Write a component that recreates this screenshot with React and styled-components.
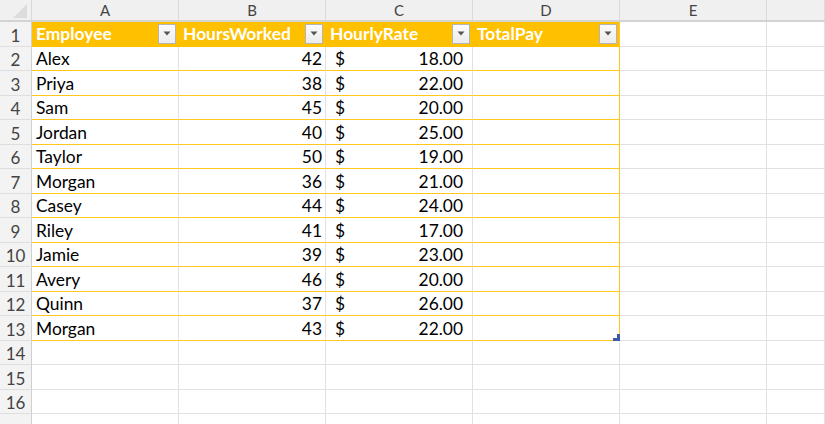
import React from "react";
import styled, { createGlobalStyle } from "styled-components";

const Global = createGlobalStyle`
  html, body { margin: 0; padding: 0; background: #ffffff; overflow: hidden; }
  body { font-family: Lato, "Liberation Sans", sans-serif; }
`;

const ROW_H = 24.5;
const COL_W = 147;
const GOLD = "#FFC000";
const GOLD_LINE = "#FFC71F";
const GRID = "#E1E1E1";

const Sheet = styled.div`
  width: 825px;
  height: 424px;
  display: flex;
  flex-direction: column;
  overflow: hidden;
  background: #fff;
`;

const HeaderBar = styled.div`
  display: flex;
  height: 22px;
  flex: none;
  background: #f0f0f0;
  border-bottom: 2px solid #d3d3d3;
  box-sizing: border-box;
`;

const Corner = styled.div`
  width: 32px;
  flex: none;
  border-right: 1px solid #d8d8d8;
  box-sizing: border-box;
  display: flex;
  align-items: flex-end;
  justify-content: flex-end;
  padding: 0 4px 2px 0;
`;

const ColLetter = styled.div`
  width: ${(p) => (p.$grow ? "auto" : `${COL_W}px`)};
  flex: ${(p) => (p.$grow ? "1" : "none")};
  box-sizing: border-box;
  border-right: 1px solid #dadada;
  display: flex;
  align-items: center;
  justify-content: center;
  font-size: 15px;
  color: #444;
  padding-bottom: 1px;
`;

const Row = styled.div`
  display: flex;
  height: ${ROW_H}px;
  flex: none;
`;

const RowNum = styled.div`
  width: 32px;
  flex: none;
  box-sizing: border-box;
  background: #f3f3f3;
  border-right: 1px solid #cfcfcf;
  border-bottom: 1px solid #dedede;
  display: flex;
  align-items: center;
  justify-content: center;
  padding-top: 3px;
  font-size: 17px;
  color: #444;
`;

const Cell = styled.div`
  width: ${(p) => (p.$grow ? "auto" : `${COL_W}px`)};
  flex: ${(p) => (p.$grow ? "1" : "none")};
  box-sizing: border-box;
  position: relative;
  display: flex;
  align-items: center;
  justify-content: ${(p) => (p.$align === "right" ? "flex-end" : "flex-start")};
  padding: 1px ${(p) => (p.$align === "right" ? "3px" : "0")} 0 4px;
  font-size: 17.4px;
  color: #000;
  white-space: nowrap;
  border-right: 1px solid ${(p) => (p.$tableEdge ? GOLD_LINE : GRID)};
  border-bottom: 1px solid ${(p) => (p.$inTable ? GOLD_LINE : GRID)};
`;

const HeadCell = styled(Cell)`
  background: ${GOLD};
  color: #fff;
  font-weight: 700;
  border-right: 1px solid ${(p) => (p.$tableEdge ? GOLD_LINE : GOLD)};
  border-bottom: 1px solid ${GOLD};
  justify-content: space-between;
  padding: 0 2px 0 4px;
`;

const Money = styled(Cell)`
  justify-content: space-between;
  padding: 1px 9px 0 9px;
`;

const FilterBtn = styled.div`
  width: 18px;
  height: 20px;
  box-sizing: border-box;
  border: 1px solid #b4b4b4;
  background: linear-gradient(#fbfbfb, #ececec);
  display: flex;
  align-items: center;
  justify-content: center;
`;

const Handle = styled.svg`
  position: absolute;
  right: -1px;
  bottom: -1px;
`;

const headers = ["Employee", "HoursWorked", "HourlyRate", "TotalPay"];

const data = [
  ["Alex", 42, "18.00"],
  ["Priya", 38, "22.00"],
  ["Sam", 45, "20.00"],
  ["Jordan", 40, "25.00"],
  ["Taylor", 50, "19.00"],
  ["Morgan", 36, "21.00"],
  ["Casey", 44, "24.00"],
  ["Riley", 41, "17.00"],
  ["Jamie", 39, "23.00"],
  ["Avery", 46, "20.00"],
  ["Quinn", 37, "26.00"],
  ["Morgan", 43, "22.00"],
];

const Arrow = () => (
  <svg width="8" height="5" viewBox="0 0 8 5">
    <path d="M0.5 0.5 L7.5 0.5 L4 4.5 Z" fill="#555" />
  </svg>
);

export default function App() {
  return (
    <>
      <Global />
      <Sheet>
        <HeaderBar>
          <Corner>
            <svg width="14" height="14" viewBox="0 0 14 14">
              <path d="M14 0 L14 14 L0 14 Z" fill="#dcdcdc" />
            </svg>
          </Corner>
          {["A", "B", "C", "D", "E"].map((l) => (
            <ColLetter key={l}>{l}</ColLetter>
          ))}
          <ColLetter $grow />
        </HeaderBar>

        <Row>
          <RowNum>1</RowNum>
          {headers.map((h, i) => (
            <HeadCell key={h} $inTable $tableEdge={i === 3}>
              <span>{h}</span>
              <FilterBtn>
                <Arrow />
              </FilterBtn>
            </HeadCell>
          ))}
          <Cell />
          <Cell $grow />
        </Row>

        {data.map(([name, hours, rate], idx) => {
          const last = idx === data.length - 1;
          return (
            <Row key={idx}>
              <RowNum>{idx + 2}</RowNum>
              <Cell $inTable>{name}</Cell>
              <Cell $inTable $align="right">
                {hours}
              </Cell>
              <Money $inTable>
                <span>$</span>
                <span>{rate}</span>
              </Money>
              <Cell $inTable $tableEdge>
                {last && (
                  <Handle width="7" height="7" viewBox="0 0 7 7">
                    <path d="M7 0 L7 7 L0 7 L0 4 L4 4 L4 0 Z" fill="#3b5ba8" />
                  </Handle>
                )}
              </Cell>
              <Cell />
              <Cell $grow />
            </Row>
          );
        })}

        {[14, 15, 16].map((n) => (
          <Row key={n}>
            <RowNum>{n}</RowNum>
            <Cell />
            <Cell />
            <Cell />
            <Cell />
            <Cell />
            <Cell $grow />
          </Row>
        ))}
        <Row>
          <RowNum />
          <Cell />
          <Cell />
          <Cell />
          <Cell />
          <Cell />
          <Cell $grow />
        </Row>
      </Sheet>
    </>
  );
}
